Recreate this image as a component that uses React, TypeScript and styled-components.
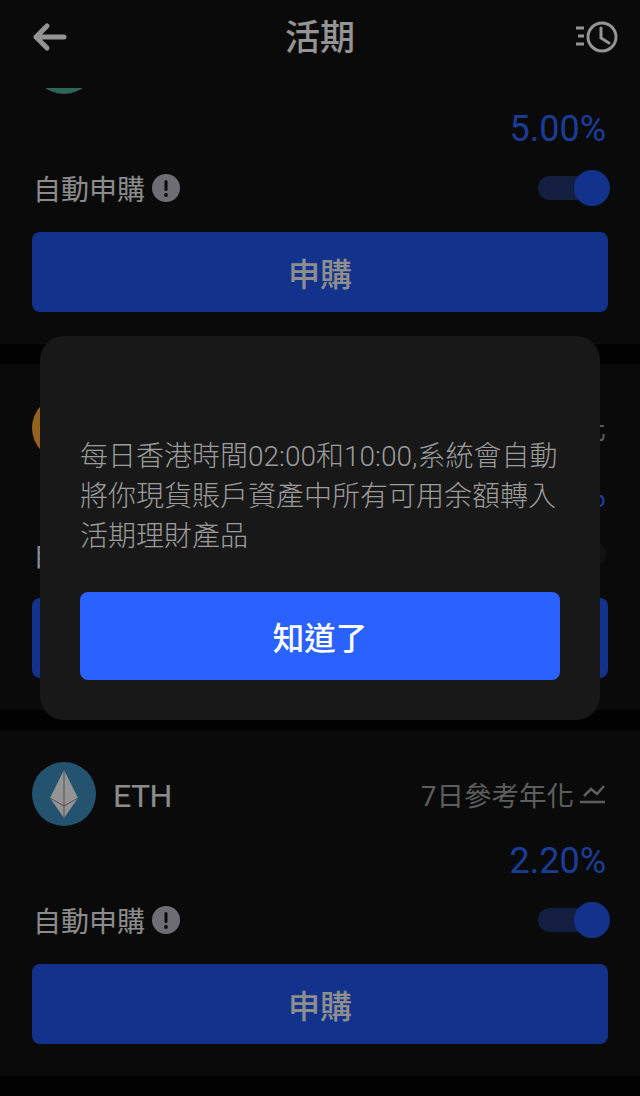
import React from 'react';
import styled, { createGlobalStyle } from 'styled-components';

const GlobalStyle = createGlobalStyle`
  html, body {
    margin: 0;
    padding: 0;
    background: #000;
  }
  * {
    box-sizing: border-box;
  }
`;

const FONT = `Roboto, "Noto Sans CJK TC", sans-serif`;

const Screen = styled.div`
  position: relative;
  width: 640px;
  height: 1096px;
  overflow: hidden;
  font-family: ${FONT};
  background: #050505;
`;

const Header = styled.header`
  position: absolute;
  top: 0;
  left: 0;
  right: 0;
  height: 88px;
  padding: 0 20px 0 32px;
  display: grid;
  grid-template-columns: 1fr 100px 1fr;
  align-items: start;
  background: #121212;
  z-index: 2;
`;

const HeaderSlot = styled.div<{ $end?: boolean }>`
  height: 74px;
  display: flex;
  align-items: center;
  justify-content: ${(p) => (p.$end ? 'flex-end' : 'flex-start')};
`;

const Title = styled.h1`
  margin: 0 6px 0 -6px;
  font-size: 35px;
  font-weight: 500;
  line-height: 78px;
  text-align: center;
  color: #fff;
`;

const List = styled.div`
  display: flex;
  flex-direction: column;
  gap: 20px;
  margin-top: -2px;
`;

const Card = styled.section`
  height: 346px;
  padding: 32px;
  display: flex;
  flex-direction: column;
  background: #121212;
`;

const CoinRow = styled.div`
  height: 64px;
  display: flex;
  align-items: center;
  justify-content: space-between;
`;

const Coin = styled.div`
  display: flex;
  align-items: center;
  gap: 17px;
`;

const CoinIcon = styled.div<{ $color: string }>`
  width: 64px;
  height: 64px;
  border-radius: 50%;
  background: ${(p) => p.$color};
  display: flex;
  align-items: center;
  justify-content: center;
`;

const CoinName = styled.span`
  padding-top: 3px;
  font-size: 32px;
  letter-spacing: -0.6px;
  color: #f0f0f0;
`;

const RateLabel = styled.div`
  display: flex;
  align-items: center;
  gap: 6px;
  padding-right: 3px;
  margin-right: -1px;
  font-size: 27.5px;
  color: #a0a0a0;
`;

const Rate = styled.div`
  margin-top: 14px;
  height: 40px;
  padding-right: 2px;
  text-align: right;
  font-size: 36px;
  line-height: 42px;
  font-weight: 400;
  color: #2f68ff;
`;

const AutoRow = styled.div`
  margin-top: 20px;
  height: 40px;
  display: flex;
  align-items: center;
  justify-content: space-between;
`;

const AutoLabel = styled.div`
  display: flex;
  align-items: center;
  gap: 7px;
  padding-left: 1px;
  font-size: 28px;
  color: #f0f0f0;
`;

const Toggle = styled.div<{ $on: boolean }>`
  position: relative;
  width: 68px;
  height: 24px;
  margin-right: 2px;
  border-radius: 12px;
  background: ${(p) => (p.$on ? '#22346e' : '#202024')};

  &::after {
    content: '';
    position: absolute;
    top: -6px;
    left: ${(p) => (p.$on ? '36px' : '0')};
    width: 36px;
    height: 36px;
    border-radius: 50%;
    background: ${(p) => (p.$on ? '#2056f0' : '#202024')};
  }
`;

const SubscribeButton = styled.button`
  margin-top: 24px;
  height: 80px;
  border: 0;
  border-radius: 8px;
  background: #2056f0;
  color: #f4f4f4;
  font-family: ${FONT};
  font-size: 32px;
  font-weight: 500;
`;

// Dim layer over the whole page while the dialog is open
const Backdrop = styled.div`
  position: absolute;
  inset: 0;
  z-index: 3;
  background: rgba(0, 0, 0, 0.42);
`;

const Dialog = styled.div`
  position: absolute;
  top: 336px;
  left: 40px;
  z-index: 4;
  width: 560px;
  height: 384px;
  padding: 101px 40px 40px;
  border-radius: 24px;
  background: #181818;
  display: flex;
  flex-direction: column;
`;

const DialogText = styled.p`
  margin: 0;
  font-size: 28px;
  font-weight: 300;
  line-height: 40px;
  color: #9c9c9c;
`;

const DialogButton = styled.button`
  margin-top: auto;
  height: 88px;
  border: 0;
  border-radius: 8px;
  background: #2a62ff;
  color: #fff;
  font-family: ${FONT};
  font-size: 31.5px;
  font-weight: 500;
`;

const BackIcon = () => (
  <svg width="36" height="30" viewBox="0 0 36 30" fill="none" stroke="#fff" strokeWidth="5" strokeLinecap="round" strokeLinejoin="round">
    <path d="M32 15H4M15 4 4 15l11 11" />
  </svg>
);

const HistoryIcon = () => (
  <svg width="44" height="32" viewBox="0 0 44 32" fill="none" stroke="#fff" strokeWidth="3">
    <circle cx="26" cy="16" r="14" />
    <path d="M25 7v10l8 5" strokeLinecap="round" />
    <path d="M0 7h8M2 15h6M0 23h8" />
  </svg>
);

const TrendIcon = () => (
  <svg width="26" height="20" viewBox="0 0 26 20" fill="none" stroke="#a0a0a0" strokeWidth="2.5">
    <path d="M4 12 11 5l6 5 7-8" />
    <path d="M0 18h25" />
  </svg>
);

const InfoIcon = () => (
  <svg width="28" height="28" viewBox="0 0 28 28">
    <circle cx="14" cy="14" r="14" fill="#bcbcc6" />
    <rect x="12.5" y="6" width="3" height="11" rx="1.5" fill="#121212" />
    <circle cx="14" cy="21" r="1.9" fill="#121212" />
  </svg>
);

const EthMark = () => (
  <svg width="28" height="48" viewBox="0 0 28 48" fill="none">
    <path d="M14 0 28 28 14 48 0 28Z" fill="#fff" />
    <path d="M14 0V48M0 28l14 8 14-8" stroke="#8a8a8a" strokeWidth="1" />
  </svg>
);

interface Product {
  name: string;
  color: string;
  rate: string;
  on: boolean;
  trend: boolean;
  mark?: React.ReactNode;
}

const products: Product[] = [
  { name: 'USDT', color: '#53ae94', rate: '5.00%', on: true, trend: true },
  { name: 'BTC', color: '#ffaa38', rate: '1.50%', on: false, trend: false },
  { name: 'ETH', color: '#3f8fc0', rate: '2.20%', on: true, trend: true, mark: <EthMark /> },
];

const App: React.FC = () => (
  <Screen>
    <GlobalStyle />
    <Header>
      <HeaderSlot>
        <BackIcon />
      </HeaderSlot>
      <Title>活期</Title>
      <HeaderSlot $end>
        <HistoryIcon />
      </HeaderSlot>
    </Header>
    <List>
      {products.map((p) => (
        <Card key={p.name}>
          <CoinRow>
            <Coin>
              <CoinIcon $color={p.color}>{p.mark}</CoinIcon>
              <CoinName>{p.name}</CoinName>
            </Coin>
            <RateLabel>
              7日參考年化
              {p.trend && <TrendIcon />}
            </RateLabel>
          </CoinRow>
          <Rate>{p.rate}</Rate>
          <AutoRow>
            <AutoLabel>
              自動申購
              <InfoIcon />
            </AutoLabel>
            <Toggle $on={p.on} />
          </AutoRow>
          <SubscribeButton>申購</SubscribeButton>
        </Card>
      ))}
    </List>
    <Backdrop />
    <Dialog>
      <DialogText>每日香港時間02:00和10:00,系統會自動將你現貨賬戶資產中所有可用余額轉入活期理財產品</DialogText>
      <DialogButton>知道了</DialogButton>
    </Dialog>
  </Screen>
);

export default App;
